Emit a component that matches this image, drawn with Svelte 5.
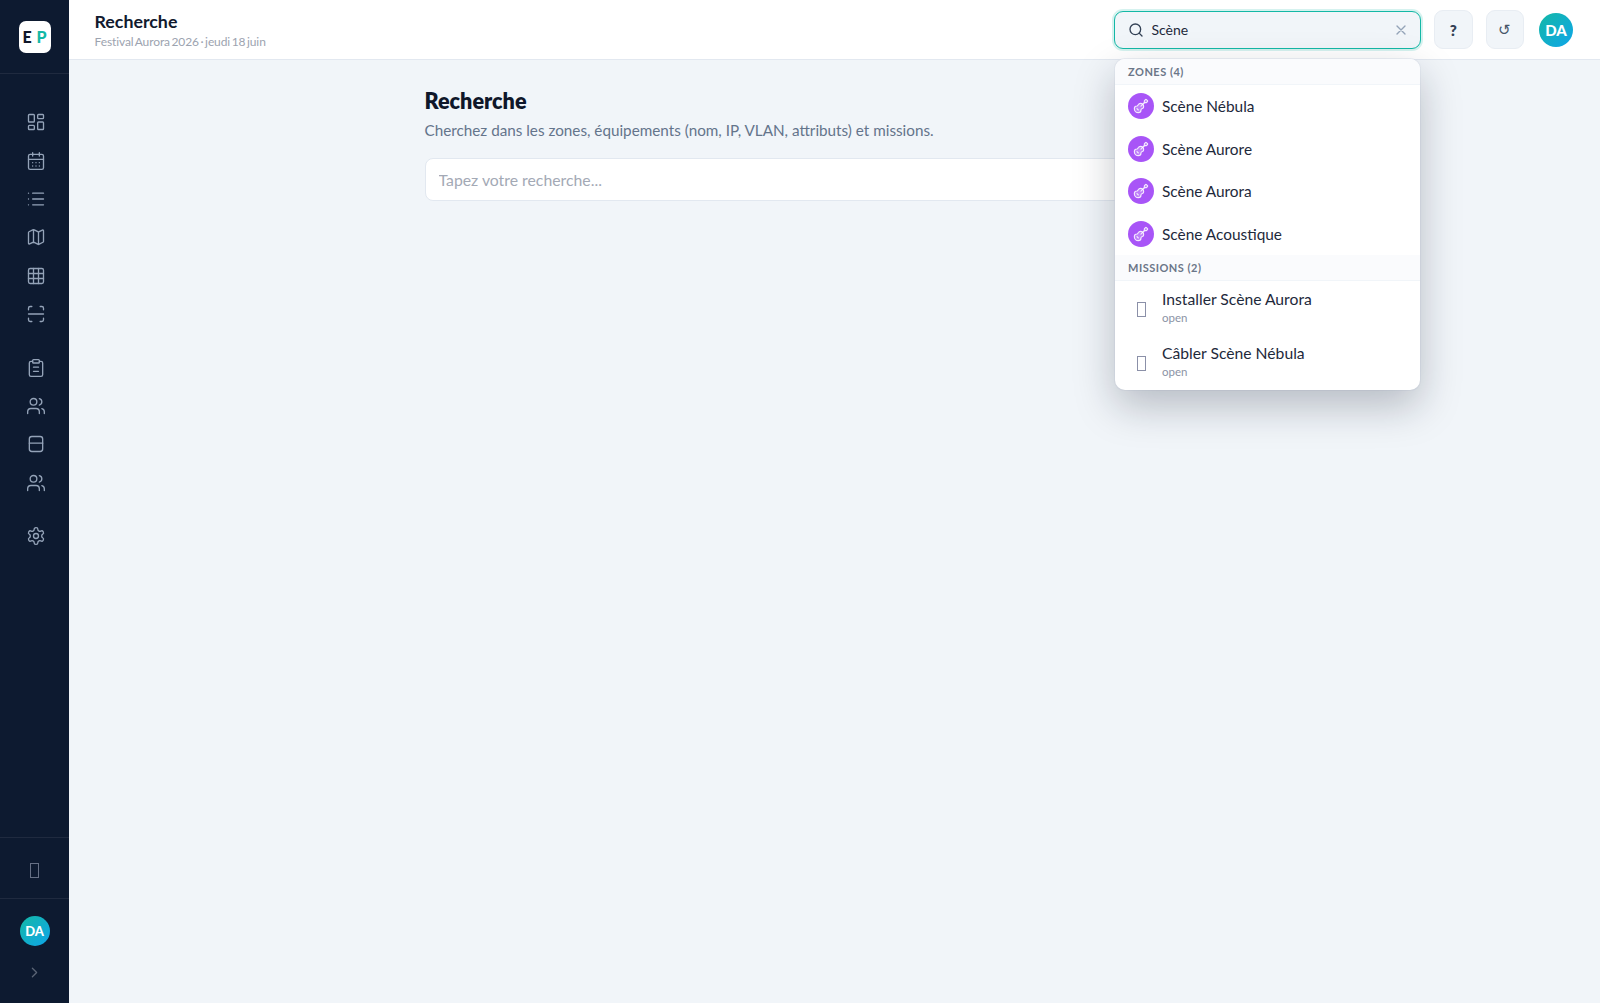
<script>
  const icons = {
    dashboard: '<rect x="3" y="3" width="7" height="9" rx="1"/><rect x="14" y="3" width="7" height="5" rx="1"/><rect x="14" y="12" width="7" height="9" rx="1"/><rect x="3" y="16" width="7" height="5" rx="1"/>',
    calendar: '<path d="M8 2v4M16 2v4"/><rect x="3" y="4" width="18" height="18" rx="2"/><path d="M3 10h18M8 14h.01M12 14h.01M16 14h.01M8 18h.01M12 18h.01M16 18h.01"/>',
    list: '<path d="M3 5h.01M3 12h.01M3 19h.01M8 5h13M8 12h13M8 19h13"/>',
    map: '<path d="M14.1 5.6a2 2 0 0 0 1.8 0l3.7-1.9A1 1 0 0 1 21 4.6v12.8a1 1 0 0 1-.6.9l-4.5 2.3a2 2 0 0 1-1.8 0l-4.2-2.2a2 2 0 0 0-1.8 0l-3.7 1.9A1 1 0 0 1 3 19.4V6.6a1 1 0 0 1 .6-.9l4.5-2.3a2 2 0 0 1 1.8 0zM15 6v15M9 3.6v15"/>',
    grid: '<rect x="3" y="3" width="18" height="18" rx="2"/><path d="M3 9h18M3 15h18M9 3v18M15 3v18"/>',
    scan: '<path d="M3 7V5a2 2 0 0 1 2-2h2M17 3h2a2 2 0 0 1 2 2v2M21 17v2a2 2 0 0 1-2 2h-2M7 21H5a2 2 0 0 1-2-2v-2M3 12h18"/>',
    clipboard: '<rect x="8" y="2" width="8" height="4" rx="1"/><path d="M16 4h2a2 2 0 0 1 2 2v14a2 2 0 0 1-2 2H6a2 2 0 0 1-2-2V6a2 2 0 0 1 2-2h2M9 11h6M9 16h6"/>',
    users: '<path d="M16 21v-2a4 4 0 0 0-4-4H6a4 4 0 0 0-4 4v2"/><circle cx="9" cy="7" r="4"/><path d="M22 21v-2a4 4 0 0 0-3-3.87M16 3.13a4 4 0 0 1 0 7.75"/>',
    box: '<rect x="4" y="3" width="16" height="18" rx="3"/><path d="M4 11h16"/>',
    settings: '<path d="M12.22 2h-.44a2 2 0 0 0-2 2v.18a2 2 0 0 1-1 1.73l-.43.25a2 2 0 0 1-2 0l-.15-.08a2 2 0 0 0-2.73.73l-.22.38a2 2 0 0 0 .73 2.73l.15.1a2 2 0 0 1 1 1.72v.51a2 2 0 0 1-1 1.74l-.15.09a2 2 0 0 0-.73 2.73l.22.38a2 2 0 0 0 2.73.73l.15-.08a2 2 0 0 1 2 0l.43.25a2 2 0 0 1 1 1.73V20a2 2 0 0 0 2 2h.44a2 2 0 0 0 2-2v-.18a2 2 0 0 1 1-1.73l.43-.25a2 2 0 0 1 2 0l.15.08a2 2 0 0 0 2.73-.73l.22-.39a2 2 0 0 0-.73-2.73l-.15-.08a2 2 0 0 1-1-1.74v-.5a2 2 0 0 1 1-1.74l.15-.09a2 2 0 0 0 .73-2.73l-.22-.38a2 2 0 0 0-2.73-.73l-.15.08a2 2 0 0 1-2 0l-.43-.25a2 2 0 0 1-1-1.73V4a2 2 0 0 0-2-2z"/><circle cx="12" cy="12" r="3"/>',
    guitar: '<path d="m11.9 12.1 4.514-4.514"/><path d="M20.1 2.3a1 1 0 0 0-1.4 0l-1.114 1.114A2 2 0 0 0 17 4.828v1.344a2 2 0 0 1-.586 1.414A2 2 0 0 1 17.828 7h1.344a2 2 0 0 0 1.414-.586L21.7 5.3a1 1 0 0 0 0-1.4z"/><path d="m6 16 2 2"/><path d="M8.23 9.85A3 3 0 0 1 11 8a5 5 0 0 1 5 5 3 3 0 0 1-1.85 2.77l-.92.38A2 2 0 0 0 12 18a4 4 0 0 1-4 4 6 6 0 0 1-6-6 4 4 0 0 1 3.85-4 2 2 0 0 0 1.46-1.23z"/>',
  }

  const navGroups = [
    ['dashboard', 'calendar', 'list', 'map', 'grid', 'scan'],
    ['clipboard', 'users', 'box', 'users'],
    ['settings'],
  ]

  const zones = ['Scène Nébula', 'Scène Aurore', 'Scène Aurora', 'Scène Acoustique']
  const missions = ['Installer Scène Aurora', 'Câbler Scène Nébula']
</script>

<div class="app">
  <aside class="sidebar">
    <div class="brand">
      <div class="logo"><span class="e">E</span><span class="p">P</span></div>
    </div>
    <nav>
      {#each navGroups as group}
        <div class="group">
          {#each group as name}
            <div class="nav-item">
              <svg class="ic" viewBox="0 0 24 24">{@html icons[name]}</svg>
            </div>
          {/each}
        </div>
      {/each}
    </nav>
    <div class="side-tool"><span class="tofu"></span></div>
    <div class="side-user">
      <div class="avatar small">DA</div>
      <svg class="chev" viewBox="0 0 24 24"><path d="m9 18 6-6-6-6" /></svg>
    </div>
  </aside>

  <div class="main">
    <header>
      <div class="titles">
        <div class="title">Recherche</div>
        <div class="sub">Festival Aurora 2026 · jeudi 18 juin</div>
      </div>
      <div class="actions">
        <div class="search">
          <svg class="s-ic" viewBox="0 0 24 24"><circle cx="11" cy="11" r="8" /><path d="m21 21-4.3-4.3" /></svg>
          <span class="s-val">Scène</span>
          <svg class="s-x" viewBox="0 0 24 24"><path d="M18 6 6 18M6 6l12 12" /></svg>
          <div class="dropdown">
            <div class="sec first">ZONES (4)</div>
            {#each zones as z}
              <div class="row">
                <div class="bubble"><svg viewBox="0 0 24 24">{@html icons.guitar}</svg></div>
                <span class="name zone">{z}</span>
              </div>
            {/each}
            <div class="sec">MISSIONS (2)</div>
            {#each missions as m}
              <div class="row mission">
                <div class="slot"><span class="tofu"></span></div>
                <div>
                  <div class="name">{m}</div>
                  <div class="status">open</div>
                </div>
              </div>
            {/each}
          </div>
        </div>
        <button class="tool help">?</button>
        <button class="tool">↺</button>
        <div class="avatar">DA</div>
      </div>
    </header>

    <main>
      <div class="page">
        <h1>Recherche</h1>
        <p>Cherchez dans les zones, équipements (nom, IP, VLAN, attributs) et missions.</p>
        <input type="text" placeholder="Tapez votre recherche..." />
      </div>
    </main>
  </div>
</div>

<style>
  :global(*) { box-sizing: border-box; margin: 0; padding: 0; }
  :global(body) { font-family: Lato, "Noto Sans", sans-serif; background: #f1f5f9; color: #0f172a; }

  .app { display: flex; height: 1003px; overflow: hidden; }

  .sidebar {
    width: 69px; flex: none; background: #0d1a30;
    display: flex; flex-direction: column;
  }
  .brand {
    height: 74px; display: flex; align-items: flex-start; justify-content: center;
    padding-top: 21px; border-bottom: 1px solid #1f2a3f;
  }
  .logo {
    width: 32px; height: 32px; background: #fff; border-radius: 7px;
    display: flex; align-items: center; justify-content: center; gap: 5px;
    font-weight: 900; font-size: 16px; line-height: 1;
  }
  .logo .e { color: #0f172a; }
  .logo .p { color: #14b8a6; }

  nav { flex: 1; padding-top: 29px; display: flex; flex-direction: column; gap: 15px; }
  .nav-item { height: 38.4px; display: flex; align-items: center; justify-content: center; padding-left: 2px; }
  .ic { width: 20px; height: 20px; fill: none; stroke: #94a3b8; stroke-width: 1.6; stroke-linecap: round; stroke-linejoin: round; }

  .side-tool {
    height: 62px; border-top: 1px solid #1f2a3f; border-bottom: 1px solid #1f2a3f;
    display: flex; align-items: center; justify-content: center; padding-top: 4px;
  }
  .tofu { display: block; width: 9px; height: 15px; border: 1px solid #8b90a8; }
  .side-tool .tofu { border-color: #667085; }
  .side-user {
    height: 104px; display: flex; flex-direction: column; align-items: center;
    padding-top: 17px; gap: 18px;
  }
  .chev { width: 17px; height: 17px; fill: none; stroke: #5b6576; stroke-width: 1.8; stroke-linecap: round; stroke-linejoin: round; }

  .avatar {
    width: 34px; height: 34px; border-radius: 50%; color: #fff; font-weight: 900; font-size: 15px;
    background: linear-gradient(135deg, #14b8a6, #0ea5e9);
    display: flex; align-items: center; justify-content: center;
  }
  .actions .avatar { margin-left: 2px; }
  .avatar.small { width: 30px; height: 30px; font-size: 13px; }

  .main { flex: 1; min-width: 0; display: flex; flex-direction: column; }
  header {
    height: 60px; flex: none; background: #fff; border-bottom: 1px solid #e2e8f0;
    display: flex; align-items: center; justify-content: space-between;
    padding: 0 27px 0 25.5px;
  }
  .title { font-size: 17.8px; font-weight: 700; color: #111a2e; line-height: 24px; }
  .sub { font-size: 12px; letter-spacing: -0.1px; word-spacing: -1.4px; color: #9ca3af; line-height: 16px; margin-top: 1px; }

  .actions { display: flex; align-items: center; gap: 13px; }
  .search {
    position: relative; width: 307px; height: 38px;
    background: #f1f5f9; border: 1.5px solid #14b8a6; border-radius: 9px;
    box-shadow: 0 0 0 2px rgba(20, 184, 166, 0.18);
    display: flex; align-items: center; padding: 0 11px 0 12.5px;
  }
  .s-ic { width: 16px; height: 16px; fill: none; stroke: #334155; stroke-width: 2; stroke-linecap: round; }
  .s-val { margin-left: 8px; font-size: 14px; color: #1e293b; flex: 1; }
  .s-x { width: 16px; height: 16px; fill: none; stroke: #94a3b8; stroke-width: 2; stroke-linecap: round; }

  .dropdown {
    position: absolute; top: 47px; left: 0; width: 305px; height: 331px; z-index: 5;
    background: #fff; border-radius: 10px; overflow: hidden;
    box-shadow: 0 16px 40px rgba(15, 23, 42, 0.26), 0 0 0 1px rgba(226, 232, 240, 0.6);
  }
  .sec {
    height: 26px; padding: 0 13px; display: flex; align-items: center;
    background: #fafbfd; border-bottom: 1px solid #f1f5f9;
    font-size: 11px; font-weight: 700; letter-spacing: 0.5px; color: #6b7688;
  }
  .row { height: 42.7px; display: flex; align-items: center; gap: 8px; padding: 0 13px; }
  .row.mission { height: 54px; padding-bottom: 2px; }
  .bubble {
    width: 26px; height: 26px; border-radius: 50%; background: #a855f7;
    display: flex; align-items: center; justify-content: center;
  }
  .bubble svg { width: 16px; height: 16px; fill: rgba(255, 255, 255, 0.25); stroke: rgba(255, 255, 255, 0.85); stroke-width: 1.7; stroke-linecap: round; stroke-linejoin: round; }
  .slot { width: 26px; display: flex; justify-content: center; margin-top: 4px; }
  .name { font-size: 15.7px; color: #1e293b; line-height: 20px; }
  .name.zone { font-size: 15.4px; }
  .status { font-size: 11.5px; color: #8b93a5; line-height: 15px; margin-top: 1px; }

  .tool {
    width: 38.5px; height: 39px; border: 1px solid #e8edf3; border-radius: 9px; background: #f1f5f9;
    color: #475569; font-family: inherit; font-size: 15px;
  }
  .tool.help { font-weight: 800; color: #334155; }

  main { flex: 1; padding: 24px; }
  .page { width: 820px; margin: 0 auto; }
  h1 { font-size: 21.6px; font-weight: 800; color: #0f172a; line-height: 32px; margin-top: 1px; }
  p { font-size: 15.25px; color: #64748b; line-height: 22px; margin-top: 2px; }
  input {
    display: block; width: 100%; height: 43px; margin-top: 17px; padding: 0 13px;
    background: #fff; border: 1px solid #e2e8f0; border-radius: 8px;
    font-family: inherit; font-size: 15.8px; outline: none;
  }
  input::placeholder { color: #a3a9b5; }
</style>
